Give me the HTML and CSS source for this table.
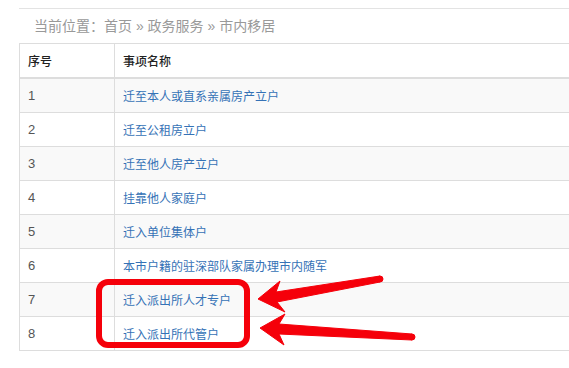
FILE: index.html
```html
<!DOCTYPE html>
<html lang="zh-CN">
<head>
    <meta charset="UTF-8">
    <meta name="viewport" content="width=device-width, initial-scale=1.0">
    <title>市内移居</title>
    <link rel="stylesheet" href="styles.css">
</head>
<body>
<div class="page">
    <div class="crumbs">当前位置：首页 » 政务服务 » 市内移居</div>

    <table class="items">
        <thead>
            <tr><th class="col-no">序号</th><th>事项名称</th></tr>
        </thead>
        <tbody>
            <tr><td>1</td><td><a href="#">迁至本人或直系亲属房产立户</a></td></tr>
            <tr><td>2</td><td><a href="#">迁至公租房立户</a></td></tr>
            <tr><td>3</td><td><a href="#">迁至他人房产立户</a></td></tr>
            <tr><td>4</td><td><a href="#">挂靠他人家庭户</a></td></tr>
            <tr><td>5</td><td><a href="#">迁入单位集体户</a></td></tr>
            <tr><td>6</td><td><a href="#">本市户籍的驻深部队家属办理市内随军</a></td></tr>
            <tr><td>7</td><td><a href="#">迁入派出所人才专户</a></td></tr>
            <tr><td>8</td><td><a href="#">迁入派出所代管户</a></td></tr>
        </tbody>
    </table>
</div>

<!-- hand-drawn markup on top of the list -->
<svg class="marks" width="569" height="368" viewBox="0 0 569 368">
    <rect x="99" y="282" width="148" height="63" rx="9" fill="none" stroke="#f5000a" stroke-width="6"/>
    <g fill="#f5000a" stroke="#f5000a" stroke-width="1" stroke-linejoin="round">
        <polygon points="258,299 280,281 276,292 380,276 380,282 277,302 285,312"/>
        <circle cx="380" cy="279" r="3"/>
        <polygon points="260,328 285,314 279,324 412,334 412,340 279,334 284,345"/>
        <circle cx="412" cy="337" r="3"/>
    </g>
</svg>
</body>
</html>
```

FILE: styles.css
```css
html, body {
    margin: 0;
    padding: 0;
    background: #fff;
    overflow: hidden;
}
body {
    font-family: "Liberation Sans", "Noto Sans CJK SC", sans-serif;
    color: #333;
    position: relative;
    width: 569px;
    height: 368px;
}

.page {
    margin: 8px 0 0 19px;
    width: 550px;
    border-top: 1px solid #e3e3e3;
}

.crumbs {
    height: 34px;
    line-height: 34px;
    padding-left: 15px;
    font-size: 14px;
    color: #999;
}

.items {
    width: 100%;
    border-collapse: collapse;
    font-size: 12px;
}
.items th, .items td {
    border: 1px solid #ddd;
    padding: 0 8px;
    height: 33px;
    text-align: left;
    vertical-align: middle;
}
.items th:last-child, .items td:last-child {
    border-right: none;
}
.items thead th {
    border-bottom: 2px solid #ddd;
    font-weight: 500;
    color: #222;
}
.items .col-no {
    width: 78px;
}
.items tbody tr:nth-child(odd) td {
    background: #f9f9f9;
}
.items td:first-child {
    color: #555;
    font-size: 13px;
}
.items a {
    color: #3572b6;
    text-decoration: none;
}

.marks {
    position: absolute;
    left: 0;
    top: 0;
}
```
